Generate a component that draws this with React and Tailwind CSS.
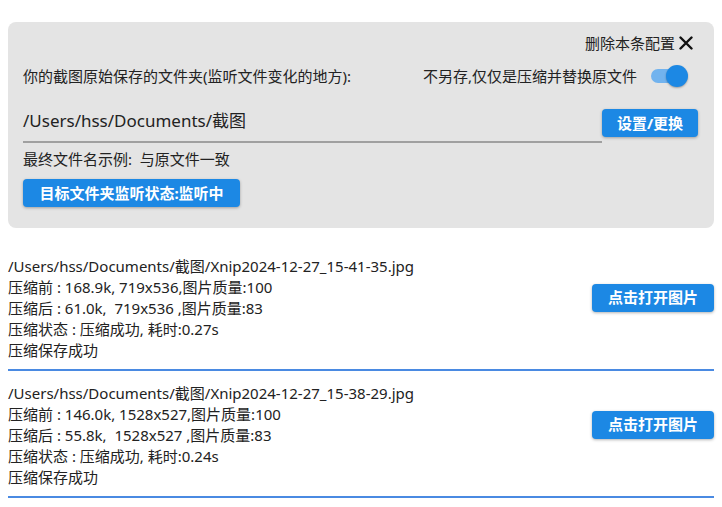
import React from 'react';

const font = { fontFamily: '"Noto Sans", "Noto Sans CJK SC", sans-serif' };

const results = [
  {
    path: '/Users/hss/Documents/截图/Xnip2024-12-27_15-41-35.jpg',
    before: '压缩前 : 168.9k, 719x536,图片质量:100',
    after: '压缩后 : 61.0k,  719x536 ,图片质量:83',
    status: '压缩状态 : 压缩成功, 耗时:0.27s',
  },
  {
    path: '/Users/hss/Documents/截图/Xnip2024-12-27_15-38-29.jpg',
    before: '压缩前 : 146.0k, 1528x527,图片质量:100',
    after: '压缩后 : 55.8k,  1528x527 ,图片质量:83',
    status: '压缩状态 : 压缩成功, 耗时:0.24s',
  },
];

function BlueButton({ children, className = '' }) {
  return (
    <button
      className={`h-[28px] rounded-[4px] bg-[#1c88e4] text-white font-bold text-[15px] shadow-[0_1px_3px_rgba(0,0,0,0.3)] ${className}`}
    >
      {children}
    </button>
  );
}

export default function App() {
  return (
    <div className="min-h-screen bg-white px-2 pt-[22px] text-[#222]" style={font}>
      {/* config panel */}
      <div className="rounded-[8px] bg-[#e4e4e4] pl-[15px] pr-[16px] pt-[10px] pb-[21px]">
        <div className="flex h-[22px] items-center justify-end pr-[5px] text-[15px]">
          <span>删除本条配置</span>
          <svg className="ml-[4px]" width="14" height="14" viewBox="0 0 14 14">
            <path d="M1.5 1.5 L12.5 12.5 M12.5 1.5 L1.5 12.5" stroke="#111" strokeWidth="2.4" strokeLinecap="round" />
          </svg>
        </div>

        <div className="mt-[11px] flex h-[22px] items-center justify-between text-[15px]">
          <span>你的截图原始保存的文件夹(监听文件变化的地方):</span>
          <div className="flex items-center pr-[13px]">
            <span>不另存,仅仅是压缩并替换原文件</span>
            <div className="relative ml-[14px] h-[14px] w-[34px] rounded-full bg-[#72b3ee]">
              <div className="absolute right-[-3px] top-[-4px] h-[22px] w-[22px] rounded-full bg-[#1c88e4] shadow-[0_1px_2px_rgba(0,0,0,0.3)]" />
            </div>
          </div>
        </div>

        <div className="mt-[19px] flex items-start">
          <div className="w-[579px] border-b-2 border-[#a0a0a0] pb-[9px]">
            <div className="h-[26px] pt-[2px] text-[17px] leading-[26px]">/Users/hss/Documents/截图</div>
          </div>
          <BlueButton className="ml-0 mt-[3px] w-[96px]">设置/更换</BlueButton>
        </div>

        <div className="mt-[5px] h-[22px] text-[15px] leading-[22px]">最终文件名示例:&nbsp;&nbsp;与原文件一致</div>

        <BlueButton className="mt-[9px] w-[217px]">目标文件夹监听状态:监听中</BlueButton>
      </div>

      {/* result list */}
      <div className="mt-[16px]">
        {results.map((r) => (
          <div key={r.path} className="flex items-center justify-between border-b-2 border-[#4a8ae2] pt-[12px] pb-[8px]">
            <div className="text-[15px] leading-[21px]">
              <div>{r.path}</div>
              <div>{r.before}</div>
              <div className="whitespace-pre">{r.after}</div>
              <div>{r.status}</div>
              <div>压缩保存成功</div>
            </div>
            <BlueButton className="mb-[22px] w-[122px]">点击打开图片</BlueButton>
          </div>
        ))}
      </div>
    </div>
  );
}
